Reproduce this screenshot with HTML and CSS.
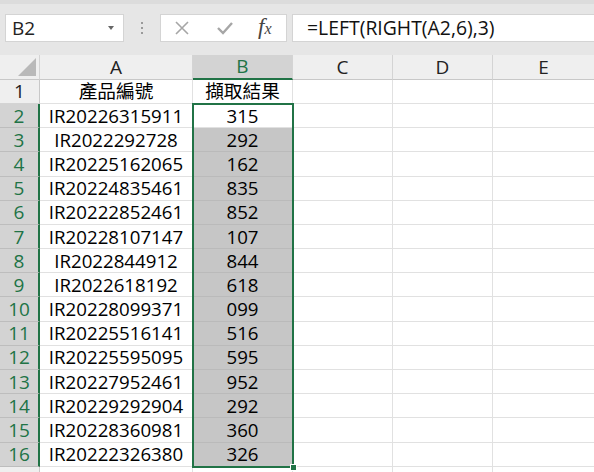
FILE: index.html
```html
<!DOCTYPE html>
<html>
<head>
<meta charset="utf-8">
<link rel="stylesheet" href="styles.css">
</head>
<body>
<div class="toolbar">
  <div class="namebox"><span class="nb-text">B2</span><span class="nb-arrow"></span></div>
  <div class="dots"><i></i><i></i><i></i></div>
  <div class="fxbox">
    <svg class="ico" width="20" height="20" viewBox="0 0 20 20"><path d="M4 4 L16 16 M16 4 L4 16" stroke="#a6a6a6" stroke-width="1.6" fill="none"/></svg>
    <svg class="ico" width="20" height="20" viewBox="0 0 20 20"><path d="M3 10 L8 15 L17 5" stroke="#a6a6a6" stroke-width="2.4" fill="none"/></svg>
    <span class="fx">f<sub>x</sub></span>
  </div>
  <div class="formula">=LEFT(RIGHT(A2,6),3)</div>
</div>
<div class="sheet">
  <div class="grid">
    <div class="ch corner"><span class="tri"></span></div>
    <div class="ch">A</div>
    <div class="ch sel">B</div>
    <div class="ch">C</div>
    <div class="ch">D</div>
    <div class="ch last">E</div>

    <div class="rh">1</div><div class="c">產品編號</div><div class="c">擷取結果</div><div class="c"></div><div class="c"></div><div class="c last"></div>
    <div class="rh sel">2</div><div class="c">IR20226315911</div><div class="c">315</div><div class="c"></div><div class="c"></div><div class="c last"></div>
    <div class="rh sel">3</div><div class="c">IR2022292728</div><div class="c hl">292</div><div class="c"></div><div class="c"></div><div class="c last"></div>
    <div class="rh sel">4</div><div class="c">IR20225162065</div><div class="c hl">162</div><div class="c"></div><div class="c"></div><div class="c last"></div>
    <div class="rh sel">5</div><div class="c">IR20224835461</div><div class="c hl">835</div><div class="c"></div><div class="c"></div><div class="c last"></div>
    <div class="rh sel">6</div><div class="c">IR20222852461</div><div class="c hl">852</div><div class="c"></div><div class="c"></div><div class="c last"></div>
    <div class="rh sel">7</div><div class="c">IR20228107147</div><div class="c hl">107</div><div class="c"></div><div class="c"></div><div class="c last"></div>
    <div class="rh sel">8</div><div class="c">IR2022844912</div><div class="c hl">844</div><div class="c"></div><div class="c"></div><div class="c last"></div>
    <div class="rh sel">9</div><div class="c">IR2022618192</div><div class="c hl">618</div><div class="c"></div><div class="c"></div><div class="c last"></div>
    <div class="rh sel">10</div><div class="c">IR20228099371</div><div class="c hl">099</div><div class="c"></div><div class="c"></div><div class="c last"></div>
    <div class="rh sel">11</div><div class="c">IR20225516141</div><div class="c hl">516</div><div class="c"></div><div class="c"></div><div class="c last"></div>
    <div class="rh sel">12</div><div class="c">IR20225595095</div><div class="c hl">595</div><div class="c"></div><div class="c"></div><div class="c last"></div>
    <div class="rh sel">13</div><div class="c">IR20227952461</div><div class="c hl">952</div><div class="c"></div><div class="c"></div><div class="c last"></div>
    <div class="rh sel">14</div><div class="c">IR20229292904</div><div class="c hl">292</div><div class="c"></div><div class="c"></div><div class="c last"></div>
    <div class="rh sel">15</div><div class="c">IR20228360981</div><div class="c hl">360</div><div class="c"></div><div class="c"></div><div class="c last"></div>
    <div class="rh sel">16</div><div class="c">IR20222326380</div><div class="c hl">326</div><div class="c"></div><div class="c"></div><div class="c last"></div>
    <div class="rh"></div><div class="c"></div><div class="c"></div><div class="c"></div><div class="c"></div><div class="c last"></div>
  </div>
  <div class="selection"><span class="handle"></span></div>
</div>
</body>
</html>
```
FILE: styles.css
```css
* { box-sizing: border-box; }
html, body { margin: 0; padding: 0; }
body {
  width: 594px;
  height: 472px;
  overflow: hidden;
  background: #ffffff;
  font-family: "Open Sans", "Noto Sans CJK TC", sans-serif;
  color: #000;
}
.toolbar {
  height: 55px;
  background: #e6e6e6;
  border-top: 4px solid #dcdcdc;
  display: flex;
  align-items: flex-start;
  padding: 10px 0 0 5px;
}
.namebox {
  width: 119px;
  height: 28px;
  background: #fff;
  border: 1px solid #d4d4d4;
  display: flex;
  align-items: center;
  justify-content: space-between;
  padding: 0 9px 0 6px;
}
.nb-text { font-size: 19px; line-height: 26px; color: #222; }
.nb-arrow {
  width: 0; height: 0;
  border-left: 3.5px solid transparent;
  border-right: 3.5px solid transparent;
  border-top: 4px solid #666;
}
.dots {
  width: 36px;
  height: 28px;
  display: flex;
  flex-direction: column;
  align-items: center;
  justify-content: center;
  gap: 3px;
}
.dots i { display: block; width: 2px; height: 2px; background: #9a9a9a; }
.fxbox {
  width: 127px;
  height: 28px;
  background: #fff;
  border: 1px solid #d4d4d4;
  display: flex;
  align-items: center;
  padding: 0 0 0 11px;
  gap: 23px;
}
.ico { display: block; }
.fx {
  font-family: "Liberation Serif", serif;
  font-style: italic;
  font-size: 23px;
  color: #444;
  line-height: 24px;
  margin-left: 0;
}
.fx sub { font-size: 16px; vertical-align: 0; }
.formula {
  margin-left: 5px;
  flex: 1;
  height: 28px;
  background: #fff;
  border: 1px solid #d4d4d4;
  border-right: none;
  font-size: 19.4px;
  line-height: 26px;
  padding-left: 14px;
  color: #111;
  white-space: nowrap;
}
.sheet { position: relative; }
.grid {
  display: grid;
  grid-template-columns: 40px 153px 100px 100px 100px 101px;
  grid-template-rows: 24.8px repeat(17, 24.2px);
}
.grid > div {
  display: flex;
  align-items: center;
  justify-content: center;
  font-size: 19px;
  line-height: 22px;
  white-space: nowrap;
}
.ch {
  background: #efefef;
  border-right: 1px solid #d4d4d4;
  border-bottom: 1px solid #c8c8c8;
  color: #222;
}
.ch.sel {
  background: #d3d3d3;
  color: #217346;
  border-bottom: 2px solid #217346;
}
.corner { position: relative; }
.tri {
  position: absolute;
  right: 3px;
  bottom: 3px;
  width: 0; height: 0;
  border-left: 18px solid transparent;
  border-bottom: 18px solid #b9b9b9;
}
.rh {
  background: #efefef;
  border-right: 1px solid #c8c8c8;
  border-bottom: 1px solid #d4d4d4;
  color: #222;
}
.rh.sel {
  background: #d3d3d3;
  color: #217346;
  border-right: 2px solid #217346;
  border-bottom-color: #bdbdbd;
}
.c {
  border-right: 1px solid #e1e1e1;
  border-bottom: 1px solid #e1e1e1;
}
.grid > .c { font-size: 18.7px; }
.c.hl {
  background: #c6c6c6;
  border-bottom-color: #bababa;
  border-right-color: #c6c6c6;
}
.last { border-right: none; }
.selection {
  position: absolute;
  left: 192px;
  top: 47.8px;
  width: 102px;
  height: 365px;
  border: 2px solid #217346;
  pointer-events: none;
}
.handle {
  position: absolute;
  right: -5px;
  bottom: -5px;
  width: 7px;
  height: 7px;
  background: #217346;
  border: 1px solid #fff;
}
```
